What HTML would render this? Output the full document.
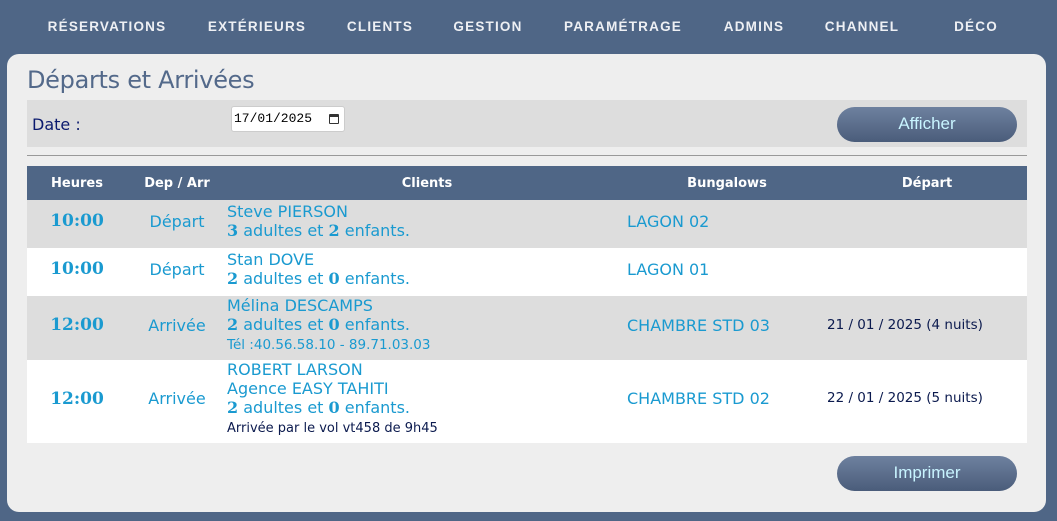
<!DOCTYPE html>
<html><head><meta charset="utf-8"><style>
*{margin:0;padding:0;box-sizing:border-box}
body{width:1057px;height:521px;background:#4f6686;position:relative;overflow:hidden;font-family:"DejaVu Sans",Verdana,sans-serif}
.nav{position:absolute;top:19px;font:bold 13.5px "Liberation Sans",Arial,sans-serif;color:#eef0f4;letter-spacing:1.2px;transform:translateX(-50%);white-space:nowrap}
.panel{position:absolute;left:7px;top:54px;width:1039px;height:458px;background:#eeeeee;border-radius:12px}
h1{position:absolute;left:27px;top:66px;font:normal 24px "DejaVu Sans",Verdana,sans-serif;color:#53698a;letter-spacing:-0.3px}
.bar{position:absolute;left:27px;top:100px;width:1000px;height:47px;background:#dddddd}
.date{position:absolute;left:32px;top:115px;font-size:16px;color:#0b1a6e}
.inp{position:absolute;left:231px;top:106px;width:114px;height:26px;background:#fff;border-radius:3px;border:1px solid #ccc;font:13px "Liberation Mono",monospace;padding:4px 2px;color:#000}
.cal{position:absolute;right:5px;top:7px;width:10px;height:10px;border:1.5px solid #333;border-top-width:3px;border-radius:1px}
.btn{position:absolute;left:837px;width:180px;height:35px;border-radius:18px;background:linear-gradient(#6e819f,#4a5c7a);color:#c8f4ff;font:17px "Liberation Sans",Arial,sans-serif;text-align:center;line-height:34px}
.hr{position:absolute;left:27px;top:155px;width:1000px;height:1px;background:#999}
table{position:absolute;left:27px;top:166px;width:1000px;border-collapse:collapse}
th{background:#4f6686;color:#fff;font:bold 13px "DejaVu Sans",Verdana,sans-serif;height:34px;text-align:center}
td{font-size:16px;color:#1a9ad0;line-height:19px;vertical-align:middle;padding-bottom:6px}
tr.g td{background:#dddddd}tr.w td{background:#fff}
.t{text-align:center;font:bold 17px "DejaVu Serif",Georgia,serif;color:#1a9ad0}
.d{text-align:center}
b{font-family:"DejaVu Serif",Georgia,serif}
.sm{font-size:13.5px;line-height:17px}
.dk{color:#0b1a4e;font-size:13px;line-height:17px}
.dep{color:#0b1a4e;font-size:13.5px}
</style></head><body>
<div class="nav" style="left:107px">RÉSERVATIONS</div>
<div class="nav" style="left:257px">EXTÉRIEURS</div>
<div class="nav" style="left:380px">CLIENTS</div>
<div class="nav" style="left:488px">GESTION</div>
<div class="nav" style="left:623px">PARAMÉTRAGE</div>
<div class="nav" style="left:754px">ADMINS</div>
<div class="nav" style="left:862px">CHANNEL</div>
<div class="nav" style="left:976px">DÉCO</div>
<div class="panel"></div>
<h1>Départs et Arrivées</h1>
<div class="bar"></div>
<div class="date">Date :</div>
<div class="inp">17/01/2025<div class="cal"></div></div>
<div class="btn" style="top:107px">Afficher</div>
<div class="hr"></div>
<table>
<tr><th style="width:100px">Heures</th><th style="width:100px">Dep / Arr</th><th style="width:400px">Clients</th><th style="width:200px">Bungalows</th><th style="width:200px">Départ</th></tr>
<tr class="g" style="height:48px"><td class="t">10:00</td><td class="d">Départ</td><td>Steve PIERSON<br><b>3</b> adultes et <b>2</b> enfants.</td><td>LAGON 02</td><td></td></tr>
<tr class="w" style="height:48px"><td class="t">10:00</td><td class="d">Départ</td><td>Stan DOVE<br><b>2</b> adultes et <b>0</b> enfants.</td><td>LAGON 01</td><td></td></tr>
<tr class="g" style="height:64px"><td class="t">12:00</td><td class="d">Arrivée</td><td>Mélina DESCAMPS<br><b>2</b> adultes et <b>0</b> enfants.<br><span class="sm">Tél :40.56.58.10 - 89.71.03.03</span></td><td>CHAMBRE STD 03</td><td class="dep">21 / 01 / 2025 (4 nuits)</td></tr>
<tr class="w" style="height:82px"><td class="t">12:00</td><td class="d">Arrivée</td><td>ROBERT LARSON<br>Agence EASY TAHITI<br><b>2</b> adultes et <b>0</b> enfants.<br><span class="dk">Arrivée par le vol vt458 de 9h45</span></td><td>CHAMBRE STD 02</td><td class="dep">22 / 01 / 2025 (5 nuits)</td></tr>
</table>
<div class="btn" style="top:456px">Imprimer</div>
</body></html>
